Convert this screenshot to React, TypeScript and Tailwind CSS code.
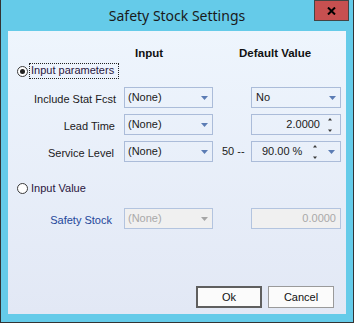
import React from "react";

const FONT = "font-['Liberation_Sans',Arial,sans-serif]";

function Arrow({ disabled }: { disabled?: boolean }) {
  return (
    <svg width="7" height="4" viewBox="0 0 7 4" className="shrink-0">
      <path d="M0 0H7L3.5 4Z" fill={disabled ? "#a6a6a6" : "#5b7cb4"} />
    </svg>
  );
}

function Spin() {
  return (
    <svg width="4" height="14" viewBox="0 0 4 14" className="shrink-0">
      <path d="M2 0L4 2.5H0Z" fill="#3a3a3a" />
      <path d="M0 11.5H4L2 14Z" fill="#3a3a3a" />
    </svg>
  );
}

function Radio({ checked }: { checked?: boolean }) {
  return (
    <div className="flex h-[11px] w-[11px] shrink-0 items-center justify-center rounded-full border border-[#3b3b3b] bg-white">
      {checked && <div className="h-[5px] w-[5px] rounded-full bg-[#222]" />}
    </div>
  );
}

function Combo({ text, disabled }: { text: string; disabled?: boolean }) {
  return (
    <div
      className={`flex h-[21px] w-[89px] shrink-0 items-center justify-between border pl-[3px] pr-[4px] ${
        disabled
          ? "border-[#b3c4df] bg-[#f0f0f0] text-[#a9a9a9]"
          : "border-[#abbcd9] text-[#1b1b1b]"
      }`}
    >
      <span>{text}</span>
      <Arrow disabled={disabled} />
    </div>
  );
}

function Row({
  label,
  pr,
  children,
  blue,
}: {
  label: string;
  pr: string;
  children: React.ReactNode;
  blue?: boolean;
}) {
  return (
    <div className="flex h-[21px] items-start">
      <div
        className={`w-[108px] shrink-0 pt-[6px] text-right ${pr} ${
          blue ? "text-[#24479a]" : "text-[#1c1a22]"
        }`}
      >
        {label}
      </div>
      <div className="ml-[8px] flex items-start">{children}</div>
    </div>
  );
}

export default function App() {
  return (
    <div
      className={`relative flex h-[323px] w-[354px] flex-col border-x border-b border-[#333] bg-[#65cbe9] text-[11px] leading-[13px] ${FONT}`}
    >
      {/* title bar */}
      <div className="flex h-[31px] shrink-0 items-center justify-center font-['Noto_Sans',sans-serif] text-[14px] text-[#1a1a1a]">
        Safety Stock Settings
      </div>
      <div className="absolute right-[4px] top-0 flex h-[21px] w-[35px] items-center justify-center border border-[#444] bg-[#c75050]">
        <svg width="9" height="8" viewBox="0 0 9 8">
          <path d="M1 0.5L8 7.5M8 0.5L1 7.5" stroke="#000" strokeWidth="2" />
        </svg>
      </div>

      {/* client area */}
      <div className="mx-[7px] flex h-[283px] flex-col bg-linear-to-b from-[#eef5fd] to-[#e2e8f5]">
        <div className="mt-[16px] flex h-[13px] pl-[127px] text-[11.5px] font-bold text-[#111]">
          <span className="w-[104px]">Input</span>
          <span>Default Value</span>
        </div>

        <div className="mt-[3px] flex h-[16px] items-center pl-[9px]">
          <Radio checked />
          <div className="ml-[1px] h-[16px] w-[90px] border border-dotted border-[#222] pl-[1px] text-[#2a1640]">
            Input parameters
          </div>
        </div>

        <div className="mt-[8px] flex flex-col gap-[6px]">
          <Row label="Include Stat Fcst" pr="pr-0">
            <Combo text="(None)" />
            <div className="w-[38px]" />
            <div className="flex h-[21px] w-[90px] items-center justify-between border border-[#abbcd9] pl-[4px] pr-[4px] text-[#1b1b1b]">
              <span>No</span>
              <Arrow />
            </div>
          </Row>
          <Row label="Lead Time" pr="pr-[1px]">
            <Combo text="(None)" />
            <div className="w-[38px]" />
            <div className="flex h-[21px] w-[90px] items-center justify-end gap-[8px] border border-[#abbcd9] pr-[8px] text-[#1b1b1b]">
              <span>2.0000</span>
              <Spin />
            </div>
          </Row>
          <Row label="Service Level" pr="pr-[2px]">
            <Combo text="(None)" />
            <div className="flex h-[21px] w-[38px] items-center pl-[9px] text-[#1b1b1b]">50 --</div>
            <div className="flex h-[21px] w-[90px] items-center border border-[#abbcd9] pl-[10px] pr-[5px] text-[#1b1b1b]">
              <span>90.00 %</span>
              <span className="ml-[11px] flex">
                <Spin />
              </span>
              <span className="ml-auto flex">
                <Arrow />
              </span>
            </div>
          </Row>
        </div>

        <div className="mt-[19px] flex h-[14px] items-center pl-[9px]">
          <Radio />
          <span className="ml-[3px] text-[#2a1640]">Input Value</span>
        </div>

        <div className="mt-[13px]">
          <Row label="Safety Stock" pr="pr-[4px]" blue>
            <Combo text="(None)" disabled />
            <div className="w-[38px]" />
            <div className="flex h-[21px] w-[90px] items-center justify-end border border-[#b3c4df] bg-[#f0f0f0] pr-[4px] text-[#a9a9a9]">
              0.0000
            </div>
          </Row>
        </div>

        <div className="mt-[57px] flex justify-end gap-[6px] pr-[12px]">
          <button className="flex h-[22px] w-[66px] items-center justify-center border-2 border-[#5f5f5f] bg-[#fbfbfb] text-[#111]">
            Ok
          </button>
          <button className="flex h-[22px] w-[66px] items-center justify-center border border-[#9a9a9a] bg-[#fbfbfb] text-[#111]">
            Cancel
          </button>
        </div>
      </div>
    </div>
  );
}
